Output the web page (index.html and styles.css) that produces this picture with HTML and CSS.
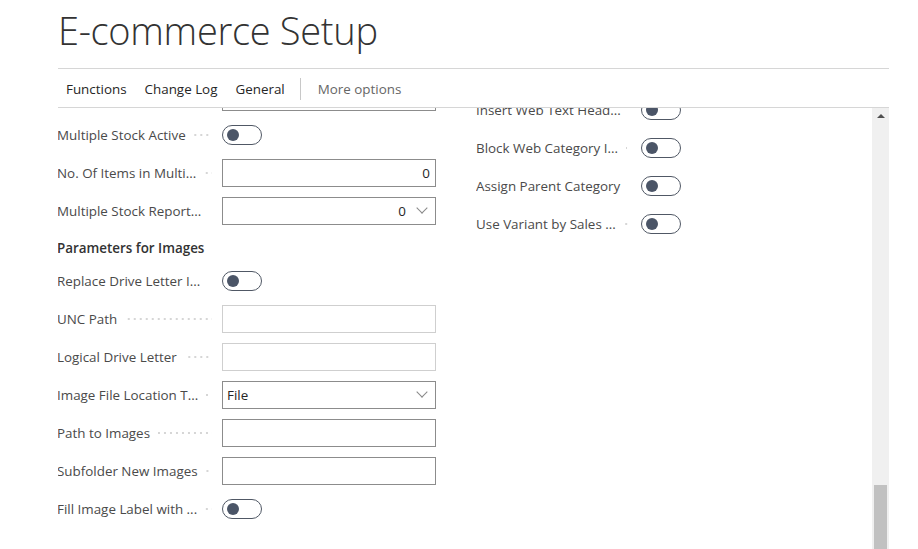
FILE: index.html
```html
<!DOCTYPE html>
<html lang="en">
<head>
    <meta charset="UTF-8">
    <title>E-commerce Setup</title>
    <link rel="stylesheet" href="styles.css">
</head>
<body>
    <div class="page">
        <h1 class="page-title">E-commerce Setup</h1>
        <div class="action-bar">
            <span class="action">Functions</span>
            <span class="action">Change Log</span>
            <span class="action">General</span>
            <span class="action-sep"></span>
            <span class="action action-more">More options</span>
        </div>
        <div class="content">
            <div class="scroll-area">
                <div class="columns">
                    <div class="col col-left">
                        <!-- row scrolled out of view, only the box bottom shows -->
                        <div class="field-row">
                            <span class="label"></span>
                            <span class="input"></span>
                        </div>
                        <div class="field-row">
                            <span class="label"><span class="label-text">Multiple Stock Active</span><span class="leader"></span></span>
                            <span class="toggle"><span class="knob"></span></span>
                        </div>
                        <div class="field-row">
                            <span class="label"><span class="label-text">No. Of Items in Multi...</span><span class="leader"></span></span>
                            <span class="input num">0</span>
                        </div>
                        <div class="field-row">
                            <span class="label"><span class="label-text">Multiple Stock Report...</span><span class="leader"></span></span>
                            <span class="input num select">0<span class="chevron"></span></span>
                        </div>
                        <div class="group-title">Parameters for Images</div>
                        <div class="field-row">
                            <span class="label"><span class="label-text">Replace Drive Letter I...</span><span class="leader"></span></span>
                            <span class="toggle"><span class="knob"></span></span>
                        </div>
                        <div class="field-row">
                            <span class="label"><span class="label-text">UNC Path</span><span class="leader"></span></span>
                            <span class="input disabled"></span>
                        </div>
                        <div class="field-row">
                            <span class="label"><span class="label-text">Logical Drive Letter</span><span class="leader"></span></span>
                            <span class="input disabled"></span>
                        </div>
                        <div class="field-row">
                            <span class="label"><span class="label-text">Image File Location T...</span><span class="leader"></span></span>
                            <span class="input select">File<span class="chevron"></span></span>
                        </div>
                        <div class="field-row">
                            <span class="label"><span class="label-text">Path to Images</span><span class="leader"></span></span>
                            <span class="input"></span>
                        </div>
                        <div class="field-row">
                            <span class="label"><span class="label-text">Subfolder New Images</span><span class="leader"></span></span>
                            <span class="input"></span>
                        </div>
                        <div class="field-row">
                            <span class="label"><span class="label-text">Fill Image Label with ...</span><span class="leader"></span></span>
                            <span class="toggle"><span class="knob"></span></span>
                        </div>
                    </div>
                    <div class="col col-right">
                        <div class="field-row">
                            <span class="label"><span class="label-text">Insert Web Text Head...</span><span class="leader"></span></span>
                            <span class="toggle"><span class="knob"></span></span>
                        </div>
                        <div class="field-row">
                            <span class="label"><span class="label-text">Block Web Category I...</span><span class="leader"></span></span>
                            <span class="toggle"><span class="knob"></span></span>
                        </div>
                        <div class="field-row">
                            <span class="label"><span class="label-text">Assign Parent Category</span><span class="leader"></span></span>
                            <span class="toggle"><span class="knob"></span></span>
                        </div>
                        <div class="field-row">
                            <span class="label"><span class="label-text">Use Variant by Sales ...</span><span class="leader"></span></span>
                            <span class="toggle"><span class="knob"></span></span>
                        </div>
                    </div>
                </div>
            </div>
            <div class="scrollbar">
                <span class="scroll-arrow"></span>
                <span class="scroll-track"></span>
                <span class="scroll-thumb"></span>
            </div>
        </div>
    </div>
</body>
</html>
```

FILE: styles.css
```css
html, body {
    margin: 0;
    height: 100%;
    overflow: hidden;
    background: #fff;
}
body {
    font-family: 'Open Sans', 'Noto Sans', Arial, sans-serif;
    font-size: 13.4px;
    color: #4a4a4a;
}
.page {
    display: flex;
    flex-direction: column;
    height: 100%;
    padding: 0 29px 0 58px;
    box-sizing: border-box;
}
.page-title {
    margin: 0;
    height: 68px;
    box-sizing: border-box;
    padding-top: 4px;
    font-size: 38px;
    font-weight: 300;
    line-height: 52px;
    color: #333;
    letter-spacing: -0.3px;
    white-space: nowrap;
}
.action-bar {
    display: flex;
    align-items: center;
    height: 38px;
    box-sizing: content-box;
    border-top: 1px solid #d6d6d6;
    border-bottom: 1px solid #d6d6d6;
    color: #262626;
    font-size: 13.4px;
}
.action {
    padding: 1px 9px 0 9px;
    white-space: nowrap;
}
.action:first-child { padding-left: 8px; }
.action-more { color: #666; }
.action-sep {
    width: 1px;
    height: 22px;
    background: #c8c8c8;
    margin: 2px 8px 0 6px;
}
.content {
    flex: 1;
    display: flex;
    min-height: 0;
}
.scroll-area {
    flex: 1;
    overflow: hidden;
}
.columns {
    display: flex;
    gap: 40px;
    margin: -30px 0 0 -1px;
}
.col { width: 379px; display: flex; flex-direction: column; }
.col-right { padding-top: 13px; }
.field-row {
    display: flex;
    align-items: center;
    height: 38px;
}
.label {
    width: 165px;
    flex: none;
    display: flex;
    align-items: center;
    padding-right: 10px;
    box-sizing: border-box;
    white-space: nowrap;
    overflow: hidden;
}
.label-text { flex: none; margin-bottom: 1px; }
.leader {
    flex: 1;
    min-width: 0;
    height: 2px;
    margin-left: 8px;
    background: linear-gradient(90deg, #d6d6d6 2px, transparent 2px) right center / 6px 2px repeat-x;
}
.input {
    width: 214px;
    height: 28px;
    box-sizing: border-box;
    border: 1px solid #8c8c8c;
    display: flex;
    align-items: center;
    padding: 0 5px 1px 4px;
    color: #262626;
}
.input.disabled { border-color: #cfcfcf; }
.input.num { justify-content: flex-end; }
.input.select { padding-right: 9px; }
.input.select.num .chevron { margin-left: 12px; }
.input.select:not(.num) { justify-content: space-between; }
.chevron {
    width: 7px;
    height: 7px;
    border-right: 1px solid #888;
    border-bottom: 1px solid #888;
    transform: rotate(45deg);
    margin-top: -5px;
}
.toggle {
    width: 40px;
    height: 20px;
    box-sizing: border-box;
    border: 1px solid #505865;
    border-radius: 10px;
    display: flex;
    align-items: center;
    padding-left: 4px;
}
.knob {
    width: 12px;
    height: 12px;
    border-radius: 50%;
    background: #4b5567;
}
.group-title {
    height: 32px;
    box-sizing: border-box;
    padding-top: 3px;
    display: flex;
    align-items: center;
    font-weight: 600;
    color: #333;
}
.scrollbar {
    width: 17px;
    background: #f0f0f0;
    display: flex;
    flex-direction: column;
    align-items: center;
}
.scroll-arrow {
    margin-top: 6px;
    width: 0;
    height: 0;
    border-left: 4px solid transparent;
    border-right: 4px solid transparent;
    border-bottom: 4px solid #505050;
}
.scroll-track { flex: 1; }
.scroll-thumb {
    width: 13px;
    height: 64px;
    background: #c1c1c1;
}
```
